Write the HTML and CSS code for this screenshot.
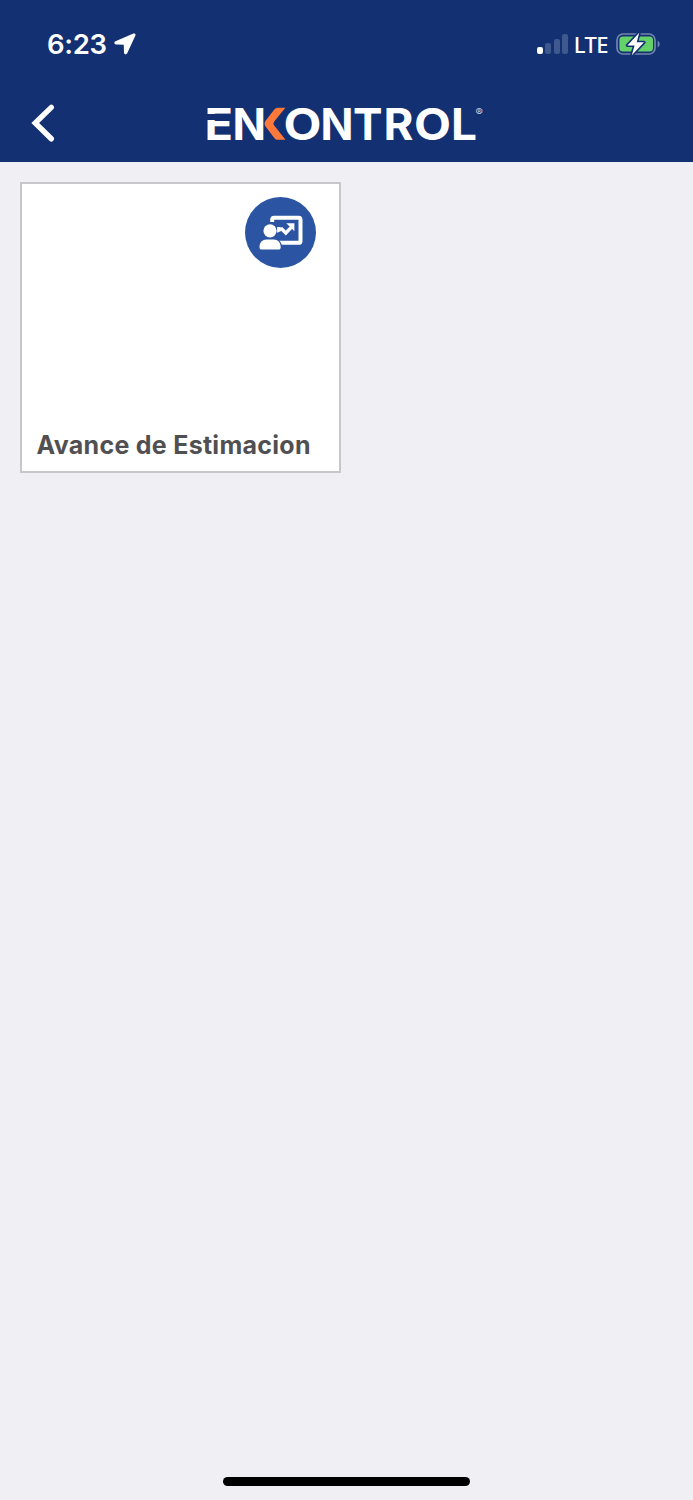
FILE: index.html
```
<!DOCTYPE html>
<html lang="es">
<head>
    <meta charset="UTF-8">
    <meta name="viewport" content="width=device-width, initial-scale=1.0">
    <title>Enkontrol</title>
    <link rel="stylesheet" href="styles.css">
</head>
<body>

<header class="header">
    <div class="status-bar">
        <div class="status-left">
            <span class="time">6:23</span>
            <svg class="location" width="22" height="22" viewBox="0 0 22 22">
                <path d="M19.8 1.4 1.8 9c-.9.5-.7 1.4.3 1.5l8.5.3.3 8.8c.1 1 1 1.2 1.5.3L20.6 2.2c.2-.6-.2-1-.8-.8z" fill="#fff" stroke="#fff" stroke-width="1.8" stroke-linejoin="round"/>
            </svg>
        </div>
        <div class="status-right">
            <div class="signal">
                <span class="bar bar-1 on"></span>
                <span class="bar bar-2"></span>
                <span class="bar bar-3"></span>
                <span class="bar bar-4"></span>
            </div>
            <span class="network">LTE</span>
            <svg class="battery" width="45" height="24" viewBox="0 0 45 24">
                <rect x="1" y="2" width="38" height="20" rx="6" fill="none" stroke="#7184ad" stroke-width="1.7"/>
                <path d="M41.6 8.7c2.8 1.2 2.8 5.5 0 6.7z" fill="#7184ad"/>
                <rect x="3.4" y="4.4" width="33.6" height="15.2" rx="3.6" fill="#65d169"/>
                <path d="M23.2.8 11.4 13.4h7.2L15.8 23.2 28 10.3h-7.3z" fill="#fff" stroke="#123072" stroke-width="3.2" stroke-linejoin="round" paint-order="stroke"/>
            </svg>
        </div>
    </div>

    <div class="nav-bar">
        <button class="back" type="button" aria-label="Regresar">
            <svg width="26" height="40" viewBox="0 0 26 40">
                <path d="M21.3 4.4 5.2 20l16.1 15.8" fill="none" stroke="#fff" stroke-width="5.4" stroke-linecap="round"/>
            </svg>
        </button>
        <svg class="logo" width="290" height="60" viewBox="0 -8 290 60">
            <g class="logo-text">
                <text x="0.5" y="37.5" textLength="28.5" lengthAdjust="spacingAndGlyphs">E</text>
                <text x="28.5" y="37.5" textLength="33.5" lengthAdjust="spacingAndGlyphs">N</text>
                <text x="79.5" y="37.5" textLength="38" lengthAdjust="spacingAndGlyphs">O</text>
                <text x="116.5" y="37.5" textLength="33" lengthAdjust="spacingAndGlyphs">N</text>
                <text x="149" y="37.5" textLength="29.5" lengthAdjust="spacingAndGlyphs">T</text>
                <text x="179.5" y="37.5" textLength="30" lengthAdjust="spacingAndGlyphs">R</text>
                <text x="210" y="37.5" textLength="37" lengthAdjust="spacingAndGlyphs">O</text>
                <text x="247" y="37.5" textLength="26" lengthAdjust="spacingAndGlyphs">L</text>
            </g>
            <!-- corte entre las barras -->
            <rect x="0" y="12" width="12" height="6" fill="#123072"/>
            <!-- flecha naranja -->
            <path d="M73.500 5.800h7.900L70.200 19.600q-1.400 2 0 4l11.300 14.200h-8q-1.800 0-3-1.500L61.800 24.800q-2.400-3.200 0-6.400L70.500 7.300Q71.700 5.800 73.500 5.800z" fill="#ff793a"/>
            <text class="mark" x="271.500" y="14">®</text>
        </svg>
    </div>
</header>

<main class="menu">
    <a class="card">
        <span class="card-icon">
            <svg width="71" height="71" viewBox="0 0 71 71">
                <path d="M27.2 25v-2.300q0-1.900 1.900-1.900h24.500q1.900 0 1.900 1.900v21.200q0 1.900-1.900 1.900H34" fill="none" stroke="#fff" stroke-width="4"/>
                <circle cx="25" cy="33.8" r="8.2" fill="#2b54a2"/>
                <circle cx="25" cy="33.8" r="6.6" fill="#fff"/>
                <path d="M14.5 50.2c0-4.800 2.800-7.800 7-7.800h7.200c4.200 0 7 3 7 7.800 0 1.500-.8 2.300-2.200 2.300H16.700c-1.400 0-2.200-.8-2.200-2.300z" fill="#fff" stroke="#2b54a2" stroke-width="2.4" paint-order="stroke"/>
                <path d="M33.800 30v3.200l3-1.200 4 4 6.400-6.600" fill="none" stroke="#fff" stroke-width="3.4"/>
                <path d="M41.300 26.200h8.100v8.100z" fill="#fff"/>
            </svg>
        </span>
        <span class="card-title">Avance de Estimacion</span>
    </a>
</main>

<div class="home-indicator"></div>

</body>
</html>
```
FILE: styles.css
```
* {
    box-sizing: border-box;
}
body {
    margin: 0;
    height: 1500px;
    display: flex;
    flex-direction: column;
    font-family: Inter, "Liberation Sans", sans-serif;
    background-color: #efeff4;
}
svg {
    display: block;
}
.header {
    height: 162px;
    background-color: #123072;
    color: white;
}
.status-bar {
    height: 88px;
    padding: 0 32px 0 47px;
    display: flex;
    justify-content: space-between;
    align-items: center;
}
.status-left, .status-right {
    display: flex;
    align-items: center;
}
.time {
    font-size: 27.5px;
    font-weight: 600;
    letter-spacing: -0.3px;
}
.location {
    margin-left: 7px;
}
.signal {
    display: flex;
    align-items: flex-end;
    gap: 2.3px;
    height: 20px;
}
.bar {
    width: 6px;
    border-radius: 2px;
    background-color: #3f598e;
}
.bar.on {
    background-color: white;
}
.bar-1 {
    height: 7px;
}
.bar-2 {
    height: 11px;
}
.bar-3 {
    height: 15px;
}
.bar-4 {
    height: 20px;
}
.network {
    margin: 0 8px 0 6px;
    font-family: "Noto Sans", sans-serif;
    font-size: 22px;
    line-height: 28px;
    font-weight: 500;
    letter-spacing: -0.6px;
}
.nav-bar {
    height: 74px;
    padding-left: 30px;
    display: flex;
    align-items: flex-start;
}
.back {
    margin-top: 15px;
    padding: 0;
    border: none;
    background: none;
    cursor: pointer;
}
.logo {
    margin: 6px 0 0 148px;
}
.logo-text {
    font-size: 43.5px;
    font-weight: 700;
    fill: white;
}
.mark {
    font-size: 11px;
    fill: #c5cde0;
}
.menu {
    flex: 1;
    padding: 20px;
}
.card {
    width: 321px;
    height: 291px;
    padding: 13px 23px 11px 14.5px;
    display: flex;
    flex-direction: column;
    justify-content: space-between;
    border: 2px solid #c7c7c9;
    background-color: white;
}
.card-icon {
    align-self: flex-end;
    width: 71px;
    height: 71px;
    border-radius: 50%;
    background-color: #2b54a2;
}
.card-title {
    color: #505052;
    font-size: 25px;
    line-height: 30px;
    font-weight: 700;
    letter-spacing: 0.28px;
    white-space: nowrap;
}
.home-indicator {
    width: 247px;
    height: 9px;
    margin: 0 auto 14px;
    border-radius: 5px;
    background-color: black;
}
```
